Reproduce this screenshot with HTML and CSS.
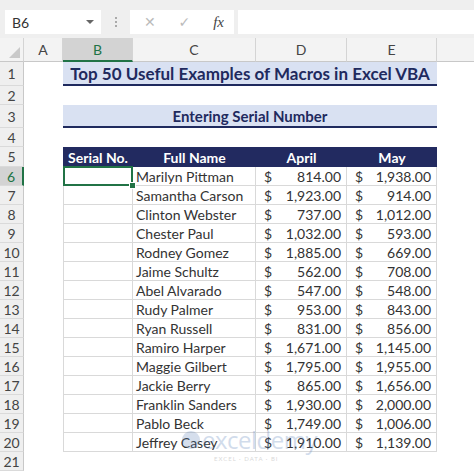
FILE: index.html
```html
<!DOCTYPE html>
<html>
<head>
    <meta name="viewport" content="width=device-width, initial-scale=1.0">
    <title>Entering Serial Number</title>
    <link rel="stylesheet" href="styles.css">
</head>
<body>
    <div class="formula-bar">
        <div class="name-box">
            <span>B6</span>
            <span class="caret"></span>
        </div>
        <div class="grip"><i></i><i></i><i></i></div>
        <div class="fx-box">
            <span class="fx-btn">&#x2715;</span>
            <span class="fx-btn">&#x2713;</span>
            <span class="fx-label">fx</span>
        </div>
        <div class="formula-input"></div>
    </div>

    <div id="sheet" class="sheet">
        <div class="corner"><span class="corner-tri"></span></div>
        <div class="col-head">A</div>
        <div class="col-head active">B</div>
        <div class="col-head">C</div>
        <div class="col-head">D</div>
        <div class="col-head">E</div>
        <div class="col-head last"></div>

        <div class="row-head">1</div>
        <div></div>
        <div class="title big">Top 50 Useful Examples of Macros in Excel VBA</div>
        <div></div>

        <div class="row-head">2</div>
        <div class="blank"></div>

        <div class="row-head">3</div>
        <div></div>
        <div class="title">Entering Serial Number</div>
        <div></div>

        <div class="row-head">4</div>
        <div class="blank"></div>

        <div class="row-head">5</div>
        <div></div>
        <div class="th first">Serial No.</div>
        <div class="th">Full Name</div>
        <div class="th">April</div>
        <div class="th">May</div>
        <div></div>
        <!-- data rows 6-20 and row 21 are added below -->
    </div>

    <div class="watermark">
        <span class="wm-logo"></span>
        <span class="wm-name">exceldemy</span>
        <span class="wm-tag">EXCEL · DATA · BI</span>
    </div>

    <script>
        const people = [
            ['Marilyn Pittman', '814.00', '1,938.00'],
            ['Samantha Carson', '1,923.00', '914.00'],
            ['Clinton Webster', '737.00', '1,012.00'],
            ['Chester Paul', '1,032.00', '593.00'],
            ['Rodney Gomez', '1,885.00', '669.00'],
            ['Jaime Schultz', '562.00', '708.00'],
            ['Abel Alvarado', '547.00', '548.00'],
            ['Rudy Palmer', '953.00', '843.00'],
            ['Ryan Russell', '831.00', '856.00'],
            ['Ramiro Harper', '1,671.00', '1,145.00'],
            ['Maggie Gilbert', '1,795.00', '1,955.00'],
            ['Jackie Berry', '865.00', '1,656.00'],
            ['Franklin Sanders', '1,930.00', '2,000.00'],
            ['Pablo Beck', '1,749.00', '1,006.00'],
            ['Jeffrey Casey', '1,910.00', '1,139.00']
        ];

        const sheet = document.getElementById('sheet');

        people.forEach((p, i) => {
            const row = i + 6;
            const sel = row === 6;
            sheet.insertAdjacentHTML('beforeend', `
                <div class="row-head${sel ? ' active' : ''}">${row}</div>
                <div></div>
                <div class="td first${sel ? ' selected' : ''}"></div>
                <div class="td name">${p[0]}</div>
                <div class="td money"><span>$</span><span>${p[1]}</span></div>
                <div class="td money"><span>$</span><span>${p[2]}</span></div>
                <div></div>
            `);
        });

        sheet.insertAdjacentHTML('beforeend', '<div class="row-head">21</div><div class="blank"></div>');
    </script>
</body>
</html>
```

FILE: styles.css
```css
body {
    margin: 0;
    width: 474px;
    height: 474px;
    overflow: hidden;
    background: #fff;
    font-family: Lato, "Open Sans", sans-serif;
    color: #333;
    position: relative;
}
.formula-bar {
    height: 38px;
    box-sizing: border-box;
    padding: 10px 0 4px 5px;
    background: #efefef;
    display: flex;
    align-items: stretch;
}
.name-box {
    width: 96px;
    background: #fff;
    display: flex;
    align-items: center;
    justify-content: space-between;
    padding: 0 7px;
    box-sizing: border-box;
    font-size: 14px;
    color: #333;
}
.caret {
    width: 0;
    height: 0;
    border-left: 4px solid transparent;
    border-right: 4px solid transparent;
    border-top: 4px solid #666;
}
.grip {
    width: 29px;
    display: flex;
    flex-direction: column;
    align-items: center;
    justify-content: center;
    gap: 2px;
}
.grip i {
    width: 2px;
    height: 2px;
    background: #aaa;
}
.fx-box {
    width: 104px;
    background: #fff;
    display: flex;
    align-items: center;
    justify-content: space-between;
    padding: 0 10px 0 14px;
    box-sizing: border-box;
}
.fx-btn {
    color: #bbb;
    font-size: 14px;
    font-family: "DejaVu Sans", sans-serif;
}
.fx-label {
    font-family: "Liberation Serif", serif;
    font-style: italic;
    font-size: 15px;
    color: #444;
}
.formula-input {
    flex: 1;
    margin-left: 4px;
    background: #fff;
}

.sheet {
    display: grid;
    grid-template-columns: 24px 39px 70px 123px 91px 90px 1fr;
    grid-template-rows: 24px 24px 19px 23px 19px 20px repeat(16, 19px);
    font-size: 14px;
}
.corner {
    background: #f3f3f3;
    border-right: 1px solid #d4d4d4;
    border-bottom: 1px solid #c8c8c8;
    position: relative;
}
.corner-tri {
    position: absolute;
    right: 3px;
    bottom: 3px;
    width: 0;
    height: 0;
    border-left: 11px solid transparent;
    border-bottom: 11px solid #c9c9c9;
}
.col-head {
    background: #f3f3f3;
    border-right: 1px solid #d4d4d4;
    border-bottom: 1px solid #c8c8c8;
    display: flex;
    align-items: center;
    justify-content: center;
    font-size: 14px;
    color: #444;
}
.col-head.last {
    border-right: none;
}
.col-head.active {
    background: #d3d3d3;
    color: #217346;
    border-bottom: 2px solid #217346;
}
.row-head {
    background: #efefef;
    border-right: 1px solid #c8c8c8;
    border-bottom: 1px solid #dadada;
    display: flex;
    align-items: center;
    justify-content: center;
    font-size: 14px;
    color: #444;
}
.row-head.active {
    background: #d3d3d3;
    color: #217346;
    border-right: 2px solid #217346;
}
.blank {
    grid-column: 2 / 8;
}
.title {
    grid-column: 3 / 7;
    background: #d9e1f2;
    border-bottom: 2px solid #1f2a5e;
    color: #1f2a5e;
    font-weight: bold;
    font-size: 15px;
    display: flex;
    align-items: center;
    justify-content: center;
}
.title.big {
    font-size: 17px;
}
.th {
    background: #222a60;
    color: #fff;
    font-weight: bold;
    display: flex;
    align-items: center;
    justify-content: center;
    font-size: 14px;
}
.td {
    border-right: 1px solid #d9d9d9;
    border-bottom: 1px solid #d9d9d9;
    display: flex;
    align-items: center;
    white-space: nowrap;
}
.td.first {
    border-left: 1px solid #d9d9d9;
}
.td.selected {
    position: relative;
}
.td.selected::before {
    content: "";
    position: absolute;
    top: -1px;
    left: -1px;
    right: -1px;
    bottom: -1px;
    border: 2px solid #217346;
}
.td.selected::after {
    content: "";
    position: absolute;
    right: -4px;
    bottom: -4px;
    width: 5px;
    height: 5px;
    background: #217346;
    border: 1px solid #fff;
}
.name {
    padding-left: 3px;
}
.money {
    justify-content: space-between;
    padding: 0 5px 0 8px;
}

.watermark {
    position: absolute;
    left: 180px;
    top: 426px;
    width: 130px;
    height: 36px;
    opacity: 0.25;
    pointer-events: none;
}
.wm-logo {
    position: absolute;
    left: 2px;
    top: 5px;
    width: 18px;
    height: 18px;
    border-radius: 50%;
    background: #5a7fb8;
}
.wm-name {
    position: absolute;
    left: 22px;
    top: -3px;
    font-family: "Open Sans", sans-serif;
    font-size: 24px;
    color: #4d76b4;
    letter-spacing: -0.5px;
}
.wm-tag {
    position: absolute;
    left: 34px;
    top: 29px;
    font-size: 6px;
    letter-spacing: 1px;
    color: #666;
}
```
